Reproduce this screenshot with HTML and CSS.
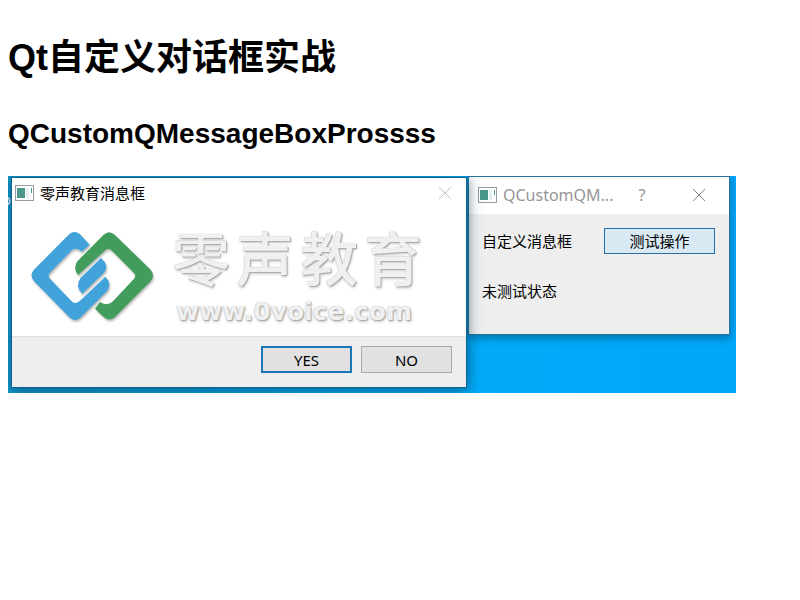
FILE: index.html
```
<!DOCTYPE html>
<html lang="zh-CN">
<head>
<meta charset="utf-8">
<title>Qt自定义对话框实战</title>
<link rel="stylesheet" href="styles.css">
</head>
<body>
<h1>Qt自定义对话框实战</h1>
<h2>QCustomQMessageBoxProssss</h2>
<main class="desktop">
  <span class="desktop-label" aria-hidden="true">o</span>
  <section class="window main-window">
    <header class="titlebar">
      <svg class="app-icon" viewBox="0 0 19 16" aria-hidden="true"><rect class="icon-frame" x=".5" y=".5" width="18" height="15"/><rect class="icon-fill" x="2" y="3" width="8" height="10"/><rect class="icon-light" x="11" y="3" width="3" height="10"/><rect class="icon-fill" x="16" y="3" width="1" height="5"/></svg>
      <span class="title">QCustomQM...</span>
      <button class="caption help" aria-label="Help">?</button>
      <button class="caption" aria-label="Close"><svg class="cross" viewBox="0 0 14 14"><path d="M1 1 13 13M13 1 1 13"/></svg></button>
    </header>
    <div class="form">
      <label for="run">自定义消息框</label>
      <button id="run" class="test">测试操作</button>
      <span>未测试状态</span>
    </div>
  </section>
  <section class="window message-box">
    <header class="titlebar">
      <svg class="app-icon" viewBox="0 0 19 16" aria-hidden="true"><rect class="icon-frame" x=".5" y=".5" width="18" height="15"/><rect class="icon-fill" x="2" y="3" width="8" height="10"/><rect class="icon-light" x="11" y="3" width="3" height="10"/><rect class="icon-fill" x="16" y="3" width="1" height="5"/></svg>
      <span class="title">零声教育消息框</span>
      <button class="caption" aria-label="Close"><svg class="cross" viewBox="0 0 14 14"><path d="M1 1 13 13M13 1 1 13"/></svg></button>
    </header>
    <div class="brand">
      <svg class="logo" viewBox="0 0 450 330" aria-hidden="true">
        <path class="blue" d="M209 74 180 43Q164 29 148 42L41 150Q28 166 41 182L148 292Q164 307 181 293L262 212Q276 190 256 170L185 238Q166 257 154 243L90 176Q82 167 90 158L156 90Q170 80 185 95Z"/>
        <path class="green" d="M174 165Q158 144 172 124L251 44Q267 29 284 44L392 149Q406 167 392 184L285 291Q268 306 252 292L225 266 240 246Q264 260 279 244L342 176Q350 167 342 159L276 92Q266 83 256 91Z"/>
        <path class="blue" d="M243 114Q270 137 252 158L187 221Q163 201 182 173Z"/>
      </svg>
      <div class="wordmark">
        <div class="brand-name"><span>零</span><span>声</span><span>教</span><span>育</span></div>
        <div class="brand-url">www.0voice.com</div>
      </div>
    </div>
    <footer class="actions">
      <button class="default">YES</button>
      <button>NO</button>
    </footer>
  </section>
</main>
</body>
</html>
```
FILE: styles.css
```
body {
  margin: 8px;
  background: #fff;
  color: #000;
  font-family: "Liberation Sans", "Noto Sans CJK SC", sans-serif;
}
h1, h2 { font-weight: 700; }
h1 { margin: 24px 0 32px; font-size: 36px; line-height: 52px; }
h2 { margin: 0 0 24px; font-size: 28px; line-height: 36px; }
button { font: inherit; color: inherit; padding: 0; }

.desktop {
  position: relative;
  max-width: 728px;
  height: 217px;
  overflow: hidden;
  background: linear-gradient(90deg, #1296cc, #02abf8 64%, #00a6f8);
  font: 15px/20px "Noto Sans", "Noto Sans CJK SC", sans-serif;
}
.desktop-label { position: absolute; left: -6px; top: 13px; color: #fff; }
.window {
  position: absolute;
  box-sizing: border-box;
  display: flex;
  flex-direction: column;
  border: 1px solid #12628f;
  background: #fff;
}
.titlebar { display: flex; align-items: center; box-sizing: border-box; }
.title { flex: 1; margin-left: 6px; white-space: nowrap; }
.app-icon { width: 19px; height: 16px; }
.icon-frame { fill: #fff; stroke: #929da2; }
.icon-fill { fill: #4a9688; }
.icon-light { fill: #e5eef0; }
.caption { border: 0; background: none; display: grid; place-items: center; }
.cross { width: 14px; height: 14px; fill: none; stroke: #858585; }

.main-window {
  left: 460px;
  top: 0;
  width: 262px;
  height: 159px;
  border-color: #28779a;
  box-shadow: 0 3px 8px #00496f99;
}
.main-window .titlebar {
  height: 37px;
  padding: 0 22px 2px 9px;
  color: #969696;
  font-size: 16px;
}
.main-window .caption { width: 16px; margin-left: 41px; }
.main-window .help { margin-left: 0; }
.form {
  flex: 1;
  display: grid;
  grid-template-columns: 1fr 111px;
  grid-template-rows: 26px 26px;
  row-gap: 24px;
  align-items: center;
  padding: 14px 14px 0 13px;
  background: #eee;
}
.test { height: 26px; border: 1px solid #276eac; background: #d9e9f4; }

.message-box {
  left: 3px;
  top: 1px;
  width: 456px;
  height: 211px;
  box-shadow: 1px 2px 12px #00304899;
}
.message-box .titlebar { height: 30px; padding: 0 14px 0 3px; }
.message-box .cross { stroke: #c2c2c2; }
.brand { flex: 1; display: flex; align-items: flex-start; padding: 12px 0 0 8px; }
.logo { width: 150px; height: 110px; flex: none; filter: drop-shadow(1px 2px 1px #0004); }
.blue { fill: #42a2da; }
.green { fill: #429d5d; }
.wordmark {
  margin-left: 2px;
  color: #f0f0f0;
  text-shadow: 0 0 1px #aaa, 1px 1px 1px #aaa, 1px 2px 3px #ccc;
}
.brand-name { display: flex; gap: 6px; font-size: 58px; line-height: 78px; font-weight: 500; }
.brand-url { padding-left: 4px; font: bold 25px/28px "DejaVu Sans", sans-serif; }
.actions {
  display: flex;
  justify-content: flex-end;
  gap: 9px;
  height: 51px;
  box-sizing: border-box;
  padding: 9px 14px 0 0;
  border-top: 1px solid #ddd;
  background: #eee;
}
.actions button { width: 91px; height: 27px; border: 1px solid #aaa; background: #e1e1e1; }
.actions .default { border: 2px solid #1976b9; }
```
